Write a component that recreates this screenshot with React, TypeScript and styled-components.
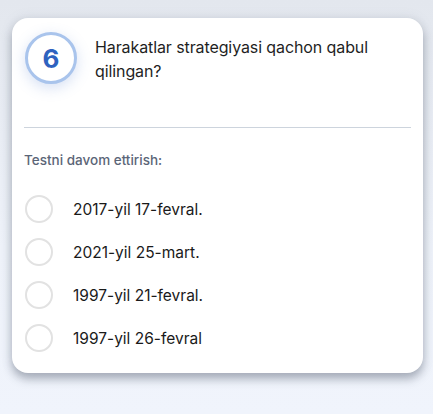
import React from "react";
import styled, { createGlobalStyle } from "styled-components";

const GlobalStyle = createGlobalStyle`
  html, body {
    margin: 0;
    padding: 0;
  }
  body {
    width: 433px;
    height: 414px;
    overflow: hidden;
    background: linear-gradient(180deg, #e3e7ee 0%, #eef2f9 60%, #f0f4fc 100%);
    font-family: Inter, "Noto Sans", sans-serif;
  }
`;

const options = [
  "2017-yil 17-fevral.",
  "2021-yil 25-mart.",
  "1997-yil 21-fevral.",
  "1997-yil 26-fevral",
];

function App() {
  return (
    <>
      <GlobalStyle />
      <Page>
        <Card>
          <Header>
            <Badge>6</Badge>
            <Question>Harakatlar strategiyasi qachon qabul qilingan?</Question>
          </Header>
          <Divider />
          <Hint>Testni davom ettirish:</Hint>
          <Options>
            {options.map((o) => (
              <Option key={o}>
                <Radio />
                <span>{o}</span>
              </Option>
            ))}
          </Options>
        </Card>
      </Page>
    </>
  );
}

const Page = styled.div`
  padding: 18px 10px 0 12px;
`;

const Card = styled.div`
  width: 411px;
  height: 355px;
  box-sizing: border-box;
  background: #fff;
  border-radius: 16px;
  padding: 14px 12px 0 12px;
  box-shadow: 0 6px 10px rgba(60, 70, 90, 0.38), 0 0 12px rgba(120, 130, 150, 0.15);
`;

const Header = styled.div`
  display: flex;
  align-items: flex-start;
  height: 95px;
`;

const Badge = styled.div`
  flex: none;
  width: 46px;
  height: 46px;
  margin: 0 0 0 1px;
  border-radius: 50%;
  border: 3px solid #a9c4ec;
  background: #fff;
  display: flex;
  align-items: center;
  justify-content: center;
  color: #2e62bf;
  font-size: 26px;
  font-weight: 700;
  box-shadow: 0 4px 14px rgba(90, 130, 210, 0.25);
`;

const Question = styled.div`
  margin: 3px 0 0 18px;
  font-size: 16px;
  line-height: 24px;
  letter-spacing: -0.1px;
  color: #1f1f1f;
`;

const Divider = styled.div`
  height: 1px;
  background: #cdd4dd;
`;

const Hint = styled.div`
  margin-top: 24px;
  font-size: 13.5px;
  font-weight: 500;
  color: #5b6577;
`;

const Options = styled.div`
  margin-top: 27px;
  display: flex;
  flex-direction: column;
  gap: 15px;
`;

const Option = styled.div`
  display: flex;
  align-items: center;
  height: 28px;
  font-size: 15.5px;
  color: #1a1a1a;
`;

const Radio = styled.div`
  flex: none;
  width: 24px;
  height: 24px;
  margin-left: 1px;
  margin-right: 20px;
  border-radius: 50%;
  border: 2px solid #e2e2e2;
`;

export default App;
